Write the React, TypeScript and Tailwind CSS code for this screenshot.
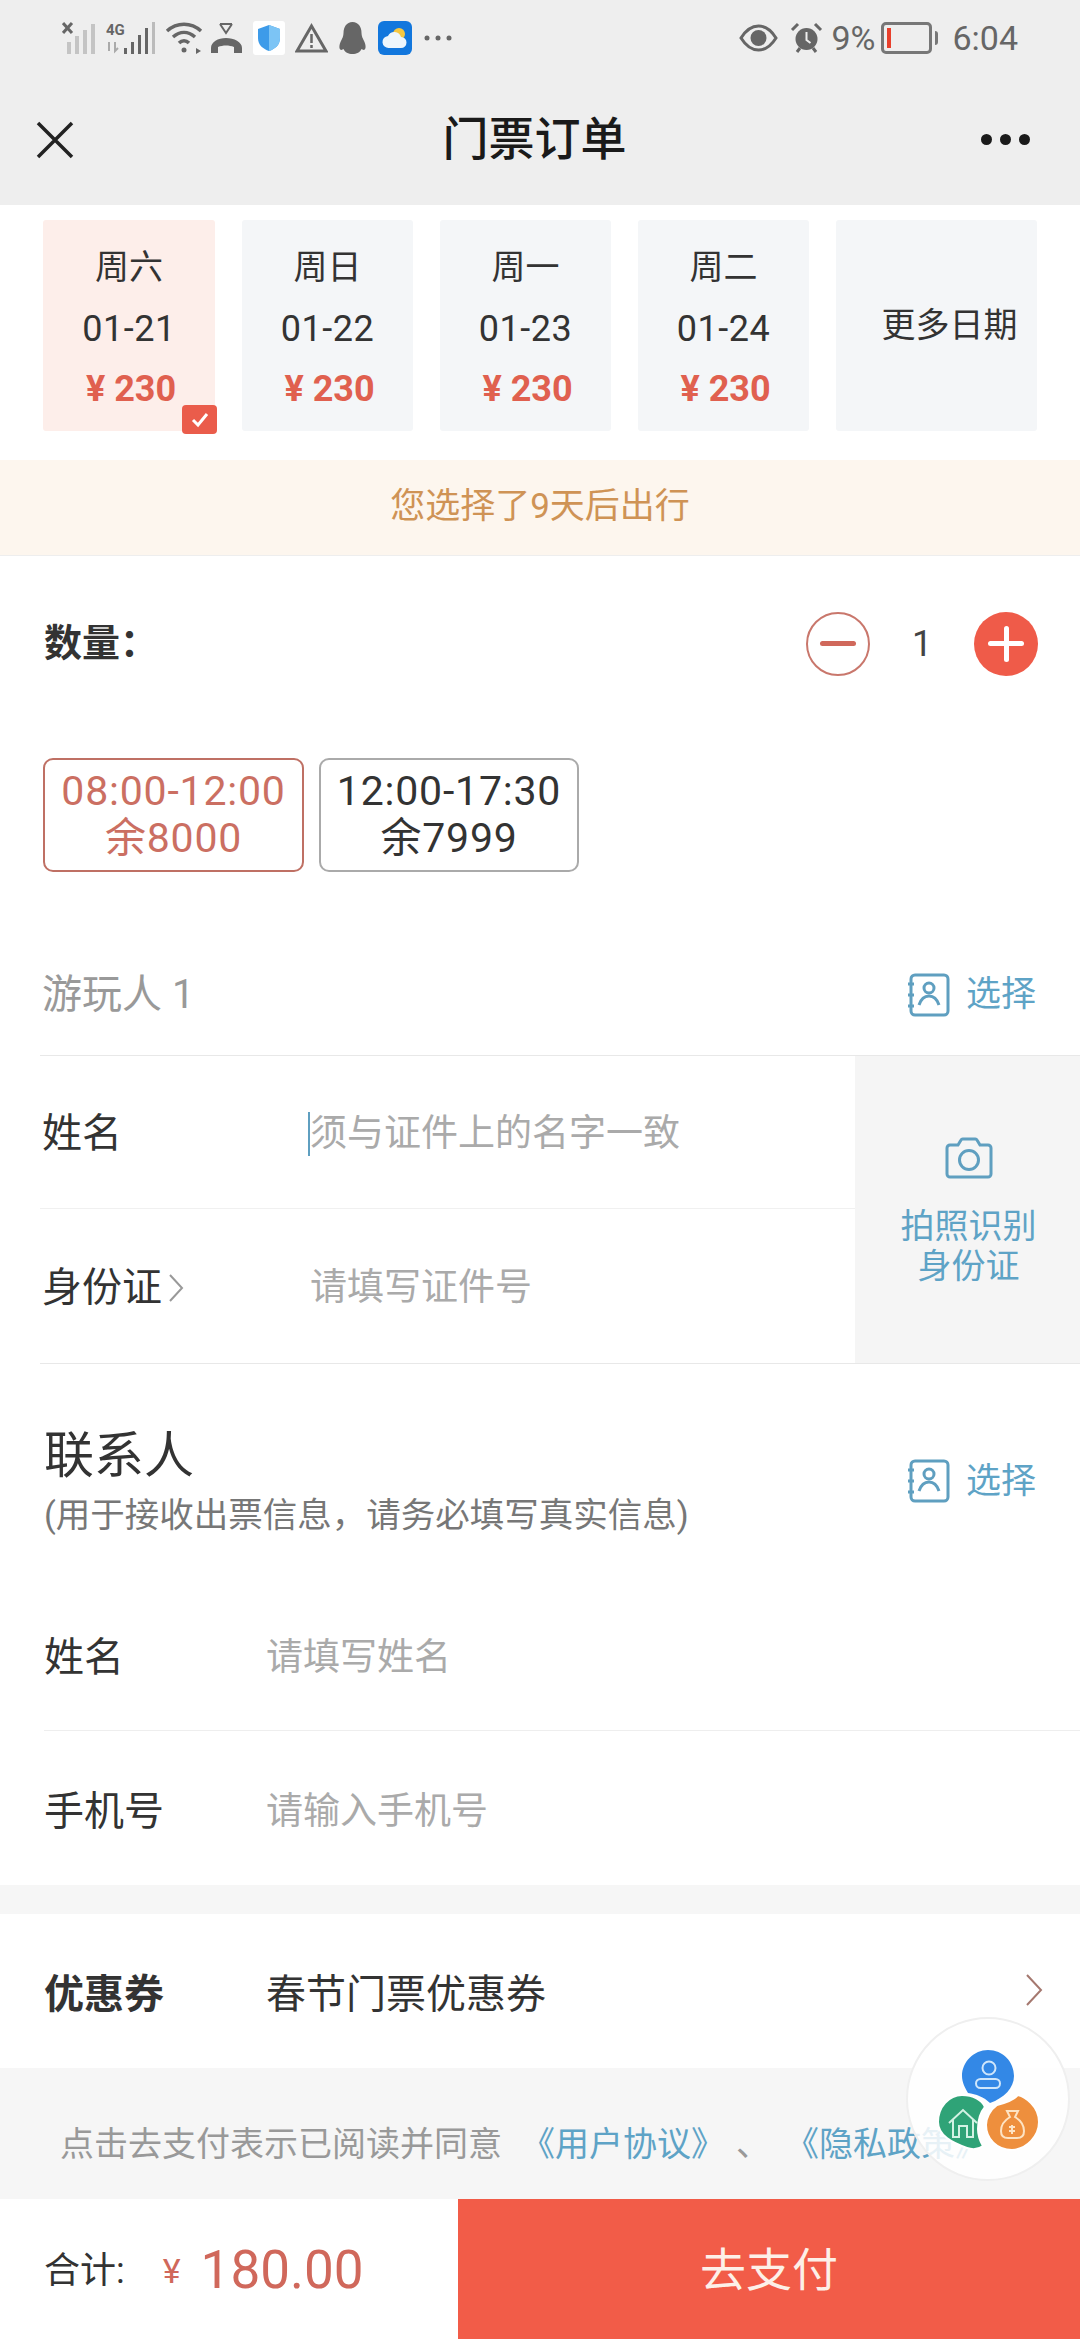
const dates = [
  { day: '周六', date: '01-21', active: true },
  { day: '周日', date: '01-22', active: false },
  { day: '周一', date: '01-23', active: false },
  { day: '周二', date: '01-24', active: false },
];

// status bar icons
const Signal = () => (
  <svg width="34" height="32" viewBox="0 0 34 32" className="shrink-0">
    <path d="M1 1l9 10M10 1l-9 10" stroke="#666" strokeWidth="3" />
    {[0, 1, 2, 3].map((i) => (
      <rect key={i} x={5 + i * 8} y={20 - i * 6} width="4" height={12 + i * 6} fill="#c4c4c4" />
    ))}
  </svg>
);

const StatusBar = () => (
  <div className="flex h-[74px] items-center justify-between pl-[62px] pr-[62px] pt-[2px]">
    <div className="flex items-center">
      <Signal />
      <svg width="52" height="32" viewBox="0 0 52 32" className="ml-[10px] shrink-0">
        <text x="0" y="13" fontSize="15" fontWeight="700" fill="#666" fontFamily="Roboto">4G</text>
        <path d="M3 20v9M9 20v9l3-3" stroke="#aaa" strokeWidth="2" fill="none" />
        <rect x="18" y="26" width="3" height="6" fill="#666" />
        <rect x="25" y="20" width="3" height="12" fill="#666" />
        <rect x="32" y="13" width="3" height="19" fill="#666" />
        <rect x="39" y="6" width="3" height="26" fill="#666" />
        <rect x="46" y="0" width="3" height="32" fill="#bbb" />
      </svg>
      <svg width="40" height="32" viewBox="0 0 40 32" fill="none" stroke="#666" strokeWidth="3.5" className="ml-[7px] shrink-0">
        <path d="M2 9c10-9 24-9 34 0" />
        <path d="M8 15c7-6 15-6 22 0" />
        <path d="M14 21c3-3 7-3 10 0" />
        <circle cx="19" cy="28" r="2.5" fill="#666" stroke="none" />
        <path d="M31 26l5 3-5 3z" fill="#666" stroke="none" />
      </svg>
      <svg width="33" height="32" viewBox="0 0 33 32" fill="none" className="ml-[5px] shrink-0">
        <path d="M10 2l6 9 6-9M10 2h12" stroke="#666" strokeWidth="2" />
        <path d="M1 31v-5c0-6 7-10 15-10s16 4 16 10v5h-8v-6c-5-2-11-2-16 0v6z" fill="#666" />
      </svg>
      <div className="ml-[10px] flex h-[34px] w-[32px] shrink-0 items-center justify-center rounded-[3px] bg-white">
        <svg width="24" height="28" viewBox="0 0 24 28">
          <path d="M12 1l11 4v9c0 7-5 11-11 13C6 25 1 21 1 14V5z" fill="#3d9be9" />
          <path d="M12 1l11 4v9c0 7-5 11-11 13z" fill="#7cc4f5" />
        </svg>
      </div>
      <svg width="33" height="30" viewBox="0 0 33 30" fill="none" className="ml-[10px] shrink-0">
        <path d="M16.5 3L31 28H2z" stroke="#666" strokeWidth="3" />
        <path d="M16.5 11v9M16.5 22v3" stroke="#666" strokeWidth="2.5" />
      </svg>
      <svg width="29" height="34" viewBox="0 0 29 34" className="ml-[10px] shrink-0">
        <path d="M14.5 1c6 0 9 5 9 11 0 3 1 5 3 9 2 5 1 8-1 8l-2-1c-1 3-5 5-9 5s-8-2-9-5l-2 1c-2 0-3-3-1-8 2-4 3-6 3-9 0-6 3-11 9-11z" fill="#666" />
      </svg>
      <div className="ml-[11px] flex h-[34px] w-[34px] shrink-0 items-center justify-center rounded-[6px] bg-[#1277dd]">
        <svg width="26" height="26" viewBox="0 0 26 26">
          <circle cx="17" cy="9" r="6" fill="#f5c842" />
          <path d="M7 23a6 6 0 0 1-1-12 7 7 0 0 1 13 1 5.500 5.500 0 0 1 0 11z" fill="#eef6fc" />
        </svg>
      </div>
      <svg width="28" height="6" viewBox="0 0 28 6" fill="#666" className="ml-[12px] shrink-0">
        <circle cx="3" cy="3" r="2.500" />
        <circle cx="14" cy="3" r="2.500" />
        <circle cx="25" cy="3" r="2.500" />
      </svg>
    </div>
    <div className="flex items-center text-[34px] leading-none text-[#666]">
      <svg width="39" height="28" viewBox="0 0 39 28" fill="none" className="shrink-0">
        <path d="M2 14C7 6 13 2 19.500 2S32 6 37 14c-5 8-11 12-17.500 12S7 22 2 14z" stroke="#666" strokeWidth="3" />
        <circle cx="19.500" cy="14" r="8" fill="#666" />
      </svg>
      <svg width="33" height="32" viewBox="0 0 33 32" fill="none" className="ml-[12px] shrink-0">
        <circle cx="16.500" cy="17" r="11" fill="#666" />
        <path d="M2 8l6-6M31 8l-6-6M7 30l3-4M26 30l-3-4" stroke="#666" strokeWidth="3" />
        <path d="M16.500 10v8l4 3" stroke="#eee" strokeWidth="2" />
      </svg>
      <span className="ml-[8px]">9%</span>
      <div className="ml-[6px] flex h-[32px] w-[51px] items-center rounded-[5px] border-[3px] border-[#777] pl-[3px]">
        <div className="h-[20px] w-[4px] bg-[#e8402c]" />
      </div>
      <div className="ml-[3px] h-[14px] w-[3px] rounded-r bg-[#777]" />
      <span className="ml-[14px]">6:04</span>
    </div>
  </div>
);

const ContactBookIcon = () => (
  <svg width="43" height="44" viewBox="0 0 43 44" fill="none" stroke="#5f9fc0" strokeWidth="3" className="shrink-0">
    <rect x="4" y="2" width="37" height="40" rx="4" />
    <path d="M1 11h6M1 22h6M1 33h6" />
    <circle cx="22" cy="15" r="5" />
    <path d="M12 32c2-6 6-9 10-9s8 3 10 9" />
  </svg>
);

const SelectButton = () => (
  <div className="flex items-center gap-[16px] text-[35px] leading-none text-[#5ea3c6]">
    <ContactBookIcon />
    <span>选择</span>
  </div>
);

const FloatingBubble = () => (
  <div className="absolute left-[906px] top-[2017px] h-[164px] w-[164px] rounded-full border-2 border-[#efefef] bg-white/85">
    <svg width="160" height="160" viewBox="2 2 160 160" fill="none">
      <path d="M82 33c15 0 26 12 26 26 0 12-10 22-24 27-6-6-14-9-22-10-3-5-6-11-6-17 0-14 12-26 26-26z" fill="#3388e6" />
      <path d="M56 78c11 0 20 5 23 12-5 6-7 14-7 22 0 6 2 12 5 17-4 3-10 4-16 2-14-5-29-12-29-26 0-15 11-27 24-27z" fill="#2fa377" stroke="#fff" strokeWidth="2" />
      <path d="M112 78c-4 5-13 8-21 10-7 5-11 13-11 20 0 14 11 25 26 25 15-1 27-14 27-28 0-8-4-15-8-19-4-4-9-7-13-8z" fill="#ee8f3d" stroke="#fff" strokeWidth="2" />
      <circle cx="83" cy="51" r="6.500" stroke="#cfe6fb" strokeWidth="2" />
      <rect x="70" y="62" width="24" height="9" rx="4.500" stroke="#cfe6fb" strokeWidth="2" />
      <path d="M43 106l14-13 14 13M47 103v17h6v-11h8v11h6v-17" stroke="#d3f2e4" strokeWidth="2" />
      <path d="M101 94h11l-3 6c5 3 9 8 9 14 0 5-3 7-7 7h-9c-4 0-7-2-7-7 0-6 4-11 9-14z" stroke="#fde3c4" strokeWidth="2" />
      <path d="M103 110h6M103 114h6M106 108v9" stroke="#fde3c4" strokeWidth="2" />
    </svg>
  </div>
);

export default function App() {
  return (
    <div className="relative flex h-[2340px] w-[1080px] flex-col overflow-hidden bg-white font-[Roboto,'Noto_Sans_CJK_SC',sans-serif]">
      {/* header */}
      <div className="h-[205px] shrink-0 bg-[#eeeeee]">
        <StatusBar />
        <div className="flex h-[131px] items-center justify-between pl-[36px] pr-[50px]">
          <svg width="38" height="38" viewBox="0 0 38 38" stroke="#222" strokeWidth="3.500" className="shrink-0">
            <path d="M2 2l34 34M36 2L2 36" />
          </svg>
          <div className="ml-[14px] pb-[2px] text-[46px] font-medium leading-none text-[#1a1a1a]">门票订单</div>
          <div className="flex gap-[8px]">
            <div className="h-[11px] w-[11px] rounded-full bg-[#1a1a1a]" />
            <div className="h-[11px] w-[11px] rounded-full bg-[#1a1a1a]" />
            <div className="h-[11px] w-[11px] rounded-full bg-[#1a1a1a]" />
          </div>
        </div>
      </div>

      {/* dates */}
      <div className="flex h-[255px] shrink-0 gap-[27px] pl-[43px] pr-[43px] pt-[15px]">
        {dates.map((d) => (
          <div
            key={d.date}
            className={
              d.active
                ? 'relative flex h-[211px] w-[172px] flex-col items-center rounded-[3px] bg-[#fdeeea] pt-[27px] text-[#333]'
                : 'relative flex h-[211px] w-[171px] flex-col items-center rounded-[3px] bg-[#f4f6f8] pt-[27px] text-[#333]'
            }
          >
            <div className="text-[34px] leading-[40px]">{d.day}</div>
            <div className="mt-[22px] text-[36px] leading-[40px] tracking-[0.5px]">{d.date}</div>
            <div className="mt-[20px] pl-[4px] text-[36px] font-bold leading-[40px] text-[#e0604f]">¥ 230</div>
            {d.active && (
              <div className="absolute left-[139px] top-[185px] flex h-[29px] w-[35px] items-center justify-center rounded-[4px] bg-[#ea5c4b]">
                <svg width="18" height="16" viewBox="0 0 18 16" fill="none" stroke="#fff" strokeWidth="3">
                  <path d="M2 8l5 5 9-11" />
                </svg>
              </div>
            )}
          </div>
        ))}
        <div className="flex h-[211px] flex-1 justify-center rounded-[3px] bg-[#f4f6f8] pl-[26px] pt-[85px] text-[34px] leading-[40px] text-[#333]">
          更多日期
        </div>
      </div>

      <div className="flex h-[96px] shrink-0 items-center justify-center border-b border-[#eeeeee] bg-[#fdf6ee] text-[35px] text-[#cf9355]">
        您选择了9天后出行
      </div>

      {/* quantity */}
      <div className="flex h-[175px] shrink-0 items-center justify-between pl-[44px] pr-[42px]">
        <div className="text-[38px] font-bold text-[#333]">数量：</div>
        <div className="flex items-center">
          <div className="flex h-[64px] w-[64px] items-center justify-center rounded-full border-2 border-[#c9776c]">
            <div className="h-[5px] w-[36px] rounded-full bg-[#d0685b]" />
          </div>
          <div className="w-[104px] text-center text-[36px] text-[#444]">1</div>
          <div className="relative flex h-[64px] w-[64px] items-center justify-center rounded-full bg-[#ef5b49]">
            <div className="h-[5px] w-[36px] rounded-full bg-white" />
            <div className="absolute h-[36px] w-[5px] rounded-full bg-white" />
          </div>
        </div>
      </div>

      {/* time slots */}
      <div className="mt-[27px] flex shrink-0 gap-[15px] pl-[43px]">
        <div className="flex h-[114px] w-[261px] flex-col items-center justify-center rounded-[10px] border-2 border-[#bf7064] text-[41px] leading-[47px] tracking-[0.8px] text-[#cb6f62]">
          <div>08:00-12:00</div>
          <div>余8000</div>
        </div>
        <div className="flex h-[114px] w-[260px] flex-col items-center justify-center rounded-[10px] border-2 border-[#aaaaaa] text-[41px] leading-[47px] tracking-[0.8px] text-[#333]">
          <div>12:00-17:30</div>
          <div>余7999</div>
        </div>
      </div>

      {/* passenger */}
      <div className="mt-[58px] flex h-[125px] shrink-0 items-center justify-between pl-[42px] pr-[44px] pt-[4px]">
        <div className="text-[40px] text-[#999]">游玩人 1</div>
        <SelectButton />
      </div>

      <div className="ml-[40px] flex h-[309px] shrink-0 border-y border-[#e8e8e8]">
        <div className="flex flex-1 flex-col">
          <div className="flex h-[153px] items-center border-b border-[#f0f0f0] pl-[2px] pt-[3px]">
            <div className="w-[266px] text-[40px] text-[#333]">姓名</div>
            <div className="h-[44px] w-[2px] bg-[#5f9fc0]" />
            <div className="text-[37px] text-[#aaa]">须与证件上的名字一致</div>
          </div>
          <div className="flex h-[154px] items-center pl-[2px] pt-[3px]">
            <div className="flex w-[268px] items-center gap-[6px] text-[40px] text-[#333]">
              身份证
              <svg width="16" height="30" viewBox="0 0 16 30" fill="none" stroke="#999" strokeWidth="2">
                <path d="M2 2l12 13L2 28" />
              </svg>
            </div>
            <div className="text-[37px] text-[#aaa]">请填写证件号</div>
          </div>
        </div>
        <div className="flex w-[225px] flex-col items-center bg-[#f5f5f5] pl-[2px] pt-[81px] text-[34px] leading-[40px] text-[#5ea3c6]">
          <svg width="48" height="42" viewBox="0 0 48 42" fill="none" stroke="#5f9fc0" strokeWidth="3">
            <path d="M5 8h8l3-5a2 2 0 0 1 2-1h12a2 2 0 0 1 2 1l3 5h8a3 3 0 0 1 3 3v26a3 3 0 0 1-3 3H5a3 3 0 0 1-3-3V11a3 3 0 0 1 3-3z" />
            <circle cx="24" cy="23" r="9.500" />
          </svg>
          <div className="mt-[27px]">拍照识别</div>
          <div>身份证</div>
        </div>
      </div>

      {/* contact */}
      <div className="relative h-[214px] shrink-0 pl-[44px] pt-[64px]">
        <div className="text-[50px] leading-[56px] text-[#333]">联系人</div>
        <div className="mt-[8px] text-[34.5px] leading-[46px] text-[#777]">(用于接收出票信息，请务必填写真实信息)</div>
        <div className="absolute right-[44px] top-[95px]">
          <SelectButton />
        </div>
      </div>
      <div className="ml-[44px] flex h-[153px] shrink-0 items-center border-b border-[#eeeeee] pt-[7px]">
        <div className="w-[222px] text-[40px] text-[#333]">姓名</div>
        <div className="text-[37px] text-[#aaa]">请填写姓名</div>
      </div>
      <div className="ml-[44px] flex h-[154px] shrink-0 items-center pt-[7px]">
        <div className="w-[222px] text-[40px] text-[#333]">手机号</div>
        <div className="text-[37px] text-[#aaa]">请输入手机号</div>
      </div>
      <div className="h-[29px] shrink-0 bg-[#f6f6f6]" />

      {/* coupon */}
      <div className="flex h-[154px] shrink-0 items-center justify-between pl-[44px] pr-[37px] pt-[7px]">
        <div className="flex items-center">
          <div className="w-[222px] text-[40px] font-bold text-[#333]">优惠券</div>
          <div className="text-[40px] text-[#333]">春节门票优惠券</div>
        </div>
        <svg width="18" height="34" viewBox="0 0 18 34" fill="none" stroke="#a5786f" strokeWidth="2" className="-mt-[10px]">
          <path d="M2 2l14 15L2 32" />
        </svg>
      </div>

      {/* agreement */}
      <div className="flex h-[131px] shrink-0 items-center whitespace-nowrap bg-[#f6f6f6] pl-[60px] pt-[22px] text-[34px] text-[#999]">
        <span>点击去支付表示已阅读并同意</span>
        <span className="ml-[19px] text-[#5ea3c6]">《用户协议》</span>
        <span className="ml-[11px]">、</span>
        <span className="ml-[15px] text-[#5ea3c6]">《隐私政策》</span>
      </div>

      {/* bottom bar */}
      <div className="flex h-[140px] shrink-0">
        <div className="flex w-[458px] items-center pl-[44px] pt-[4px]">
          <div className="text-[36px] text-[#333]">合计:</div>
          <div className="ml-[38px] text-[34px] text-[#d0685b]">¥</div>
          <div className="ml-[20px] text-[53px] text-[#d0685b]">180.00</div>
        </div>
        <div className="flex flex-1 items-center justify-center bg-[#f25c48] pt-[2px] text-[46px] text-[#fdf0e8]">
          去支付
        </div>
      </div>

      <FloatingBubble />
    </div>
  );
}
